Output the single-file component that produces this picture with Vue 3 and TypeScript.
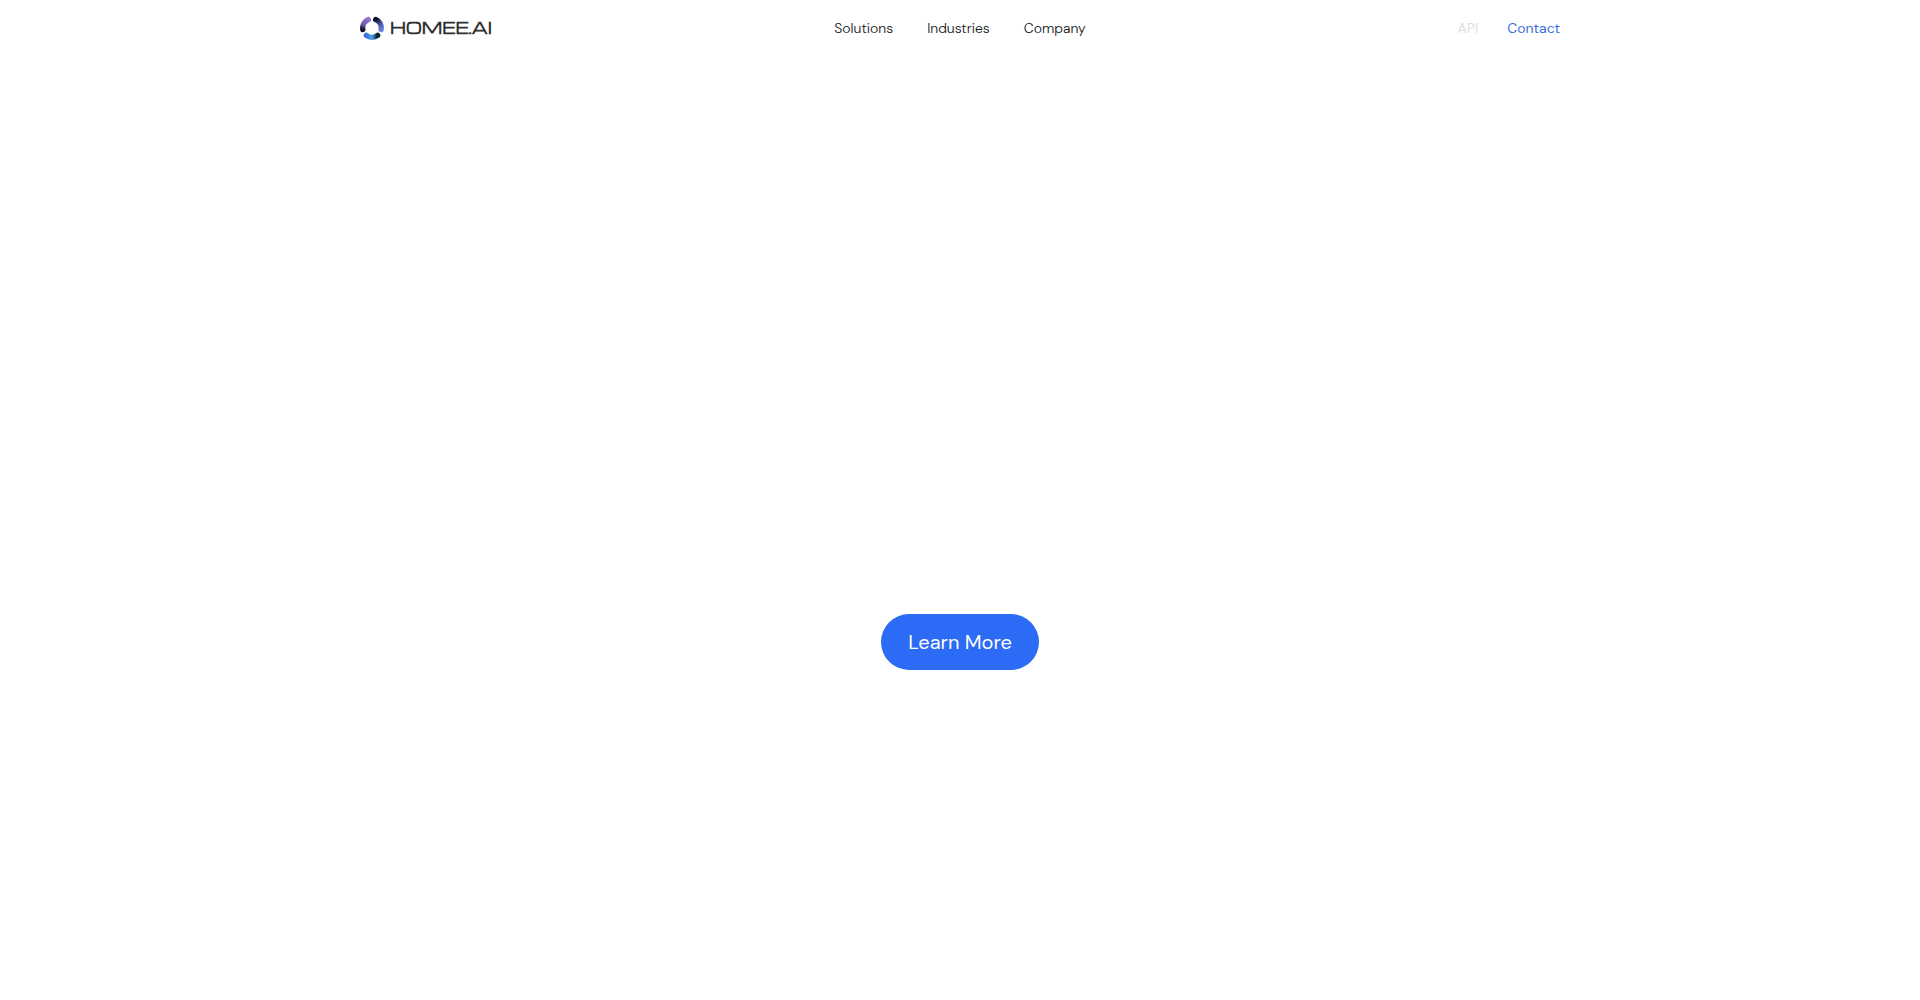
<script setup lang="ts">
interface NavLink {
  label: string
  href: string
}

const links: NavLink[] = [
  { label: 'Solutions', href: '#solutions' },
  { label: 'Industries', href: '#industries' },
  { label: 'Company', href: '#company' },
]
</script>

<template>
  <div class="page">
    <header class="header">
      <div class="bar">
        <a class="brand" href="#home">
          <svg class="mark" viewBox="0 0 24 24" fill="none" aria-hidden="true">
            <defs>
              <linearGradient id="arc-left" gradientUnits="userSpaceOnUse" x1="9" y1="2" x2="3" y2="16">
                <stop offset="0" stop-color="#9a78cc" />
                <stop offset="0.55" stop-color="#6a5bb0" />
                <stop offset="0.85" stop-color="#0d1526" />
              </linearGradient>
              <linearGradient id="arc-right" gradientUnits="userSpaceOnUse" x1="14" y1="3" x2="21" y2="15">
                <stop offset="0.1" stop-color="#0b1224" />
                <stop offset="0.5" stop-color="#4450a8" />
                <stop offset="1" stop-color="#6f86e0" />
              </linearGradient>
              <linearGradient id="arc-bottom" gradientUnits="userSpaceOnUse" x1="4" y1="20" x2="20" y2="19">
                <stop offset="0" stop-color="#3f62d0" />
                <stop offset="0.5" stop-color="#43a0ea" />
                <stop offset="0.8" stop-color="#0a2034" />
              </linearGradient>
            </defs>
            <g stroke-width="5.4" stroke-linecap="round">
              <path d="M8.3 3.5A9.3 9.3 0 0 0 2.8 13.5" stroke="url(#arc-left)" />
              <path d="M15.7 3.5A9.3 9.3 0 0 1 21.2 13.5" stroke="url(#arc-right)" />
              <path d="M6.4 19.4A9.3 9.3 0 0 0 17.6 19.4" stroke="url(#arc-bottom)" />
            </g>
          </svg>
          <span class="wordmark">HOMEE.AI</span>
        </a>
        <nav class="nav" aria-label="Main">
          <a v-for="link in links" :key="link.label" :href="link.href">{{ link.label }}</a>
        </nav>
        <div class="actions">
          <a class="api" href="#api">API</a>
          <a class="contact" href="#contact">Contact</a>
        </div>
      </div>
    </header>
    <main class="hero">
      <button class="cta" type="button">Learn More</button>
    </main>
  </div>
</template>

<style>
body {
  margin: 0;
  background: #fff;
}
</style>

<style scoped>
.page {
  display: flex;
  flex-direction: column;
  min-height: 100vh;
  font-family: "DM Sans", Roboto, sans-serif;
  font-size: 14px;
  line-height: 20px;
}

.header {
  padding: 0 24px;
}

.bar {
  display: grid;
  grid-template-columns: 1fr auto 1fr;
  align-items: center;
  max-width: 1200px;
  height: 56px;
  margin: 0 auto;
}

a {
  color: #111418;
  text-decoration: none;
}

.brand {
  display: flex;
  align-items: center;
  gap: 6px;
}

.mark {
  width: 24px;
  height: 24px;
  overflow: visible;
}

.wordmark {
  font-family: Michroma, Orbitron, "DejaVu Sans", sans-serif;
  font-size: 15px;
  font-weight: 700;
  color: #303030;
}

.nav {
  display: flex;
  gap: 34px;
  font-weight: 300;
}

.actions {
  display: flex;
  justify-content: flex-end;
  gap: 29px;
}

.actions .api {
  color: #dcdfe1;
}

.actions .contact {
  color: #3a6fd8;
}

.hero {
  flex: 1;
  display: flex;
  align-items: center;
  justify-content: center;
  padding-top: 228px;
}

.cta {
  height: 56px;
  padding: 0 27px;
  border: 0;
  border-radius: 28px;
  background: #2c6bf5;
  color: #fff;
  font-family: inherit;
  font-size: 20px;
  line-height: 28px;
  cursor: pointer;
}
</style>
